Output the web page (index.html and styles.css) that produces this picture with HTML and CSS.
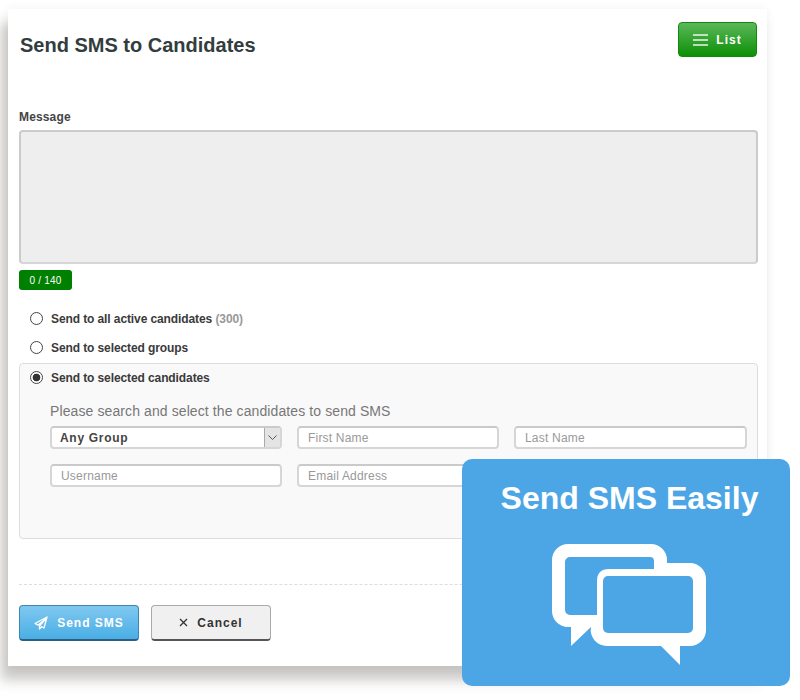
FILE: index.html
```html
<!DOCTYPE html>
<html lang="en">
<head>
  <meta charset="UTF-8" />
  <title>Send SMS to Candidates</title>
  <link rel="stylesheet" href="styles.css">
</head>
<body>
  <div class="card">
    <header class="top">
      <h1>Send SMS to Candidates</h1>
      <button class="btn btn-list">
        <svg width="15" height="12" viewBox="0 0 15 12"><path d="M0 1h15M0 6h15M0 11h15" stroke="#fff" stroke-width="1.400" opacity=".9"/></svg>
        List
      </button>
    </header>

    <label class="msg-label">Message</label>
    <div class="msg-box"></div>
    <span class="counter">0 / 140</span>

    <div class="opt"><span class="radio"></span><span>Send to all active candidates <em>(300)</em></span></div>
    <div class="opt"><span class="radio"></span><span>Send to selected groups</span></div>

    <section class="picker">
      <div class="opt opt-on"><span class="radio checked"></span><span>Send to selected candidates</span></div>
      <p class="hint">Please search and select the candidates to send SMS</p>
      <div class="fields">
        <div class="fake-select">
          <span>Any Group</span>
          <span class="arrow"><svg width="9" height="5" viewBox="0 0 9 5"><path d="M.5.5l4 4 4-4" fill="none" stroke="#555"/></svg></span>
        </div>
        <input type="text" placeholder="First Name">
        <input type="text" placeholder="Last Name">
        <input type="text" placeholder="Username">
        <input type="text" placeholder="Email Address">
      </div>
    </section>

    <div class="actions">
      <button class="btn btn-send">
        <svg width="14" height="14" viewBox="0 0 14 14"><path d="M13 1L1 7.500l3.200 1.600L12 2.500 5.500 10v3l2-2.300 2.500 1.300z" fill="none" stroke="#fff" stroke-width="1.300" stroke-linejoin="round"/></svg>
        Send SMS
      </button>
      <button class="btn btn-cancel">
        <svg width="9" height="9" viewBox="0 0 9 9"><path d="M1 1l7 7M8 1L1 8" stroke="#333" stroke-width="1.300"/></svg>
        Cancel
      </button>
    </div>
  </div>

  <aside class="promo">
    <h2>Send SMS Easily</h2>
    <svg class="promo-icon" width="154" height="121" viewBox="0 0 154 121">
      <path fill="#fff" d="M16 0H99a16 16 0 0 1 16 16V19H138a16 16 0 0 1 16 16V86a16 16 0 0 1-16 16H128V121L109 102H55a16 16 0 0 1-16-19L19 102V83H16A16 16 0 0 1 0 67V16A16 16 0 0 1 16 0Z"/>
      <path fill="#4ca6e6" d="M18 13H98a4 4 0 0 1 4 4V25H57Q45 25 45 37V71H18a5 5 0 0 1-5-5V18a5 5 0 0 1 5-5Z"/>
      <rect fill="#4ca6e6" x="51" y="32" width="90" height="57" rx="5"/>
    </svg>
  </aside>
</body>
</html>
```

FILE: styles.css
```css
* {
  box-sizing: border-box;
}
html, body {
  min-height: 700px;
}
body {
  margin: 0;
  padding: 9px 0 34px 8px;
  background: #fff;
  font-family: "Liberation Sans", Arial, sans-serif;
  color: #333;
}

.card {
  width: 759px;
  height: 657px;
  padding: 13px 9px 0 11px;
  background: #fff;
  box-shadow: -7px 14px 12px rgba(60, 58, 50, .28), 0 0 10px rgba(0, 0, 0, .06);
}

.top {
  display: flex;
  justify-content: space-between;
  align-items: flex-start;
  height: 35px;
  padding: 0 1px;
}
.top h1 {
  margin: 0;
  font-size: 20px;
  line-height: 46px;
  color: #333d3d;
}

.btn {
  display: flex;
  align-items: center;
  justify-content: center;
  font-family: "Liberation Sans", Arial, sans-serif;
  font-weight: bold;
  border-radius: 4px;
  cursor: pointer;
}
.btn-list {
  width: 79px;
  height: 35px;
  gap: 8px;
  font-size: 12px;
  letter-spacing: 1px;
  color: #fff;
  border: 1px solid #118a0b;
  background: linear-gradient(180deg, #5ab85a, #0d8f06);
}

.msg-label {
  display: block;
  margin-top: 53px;
  font-size: 12px;
  line-height: 14px;
  font-weight: bold;
  letter-spacing: .15px;
  color: #444;
}
.msg-box {
  height: 134px;
  margin-top: 6px;
  background: #eee;
  border: 2px solid #cbcbcb;
  border-bottom-color: #d6d6d6;
  border-radius: 4px;
}
.counter {
  display: block;
  width: 53px;
  height: 20px;
  margin-top: 6px;
  background: #008000;
  color: #fff;
  border-radius: 3px;
  font-size: 10px;
  letter-spacing: .2px;
  line-height: 21px;
  text-align: center;
}

.opt {
  display: flex;
  align-items: center;
  gap: 8px;
  height: 29px;
  padding-left: 11px;
  font-size: 12px;
  font-weight: bold;
  letter-spacing: -.1px;
  color: #3a3a3a;
}
.counter + .opt {
  margin-top: 14px;
}
.opt em {
  font-style: normal;
  color: #999;
}
.radio {
  width: 13px;
  height: 13px;
  border: 1px solid #444;
  border-radius: 50%;
  background: #fff;
}
.radio.checked {
  background: radial-gradient(circle, #333 0, #333 3.500px, #fff 4.200px);
}

.picker {
  height: 176px;
  margin-top: 1px;
  background: #f9f9f9;
  border: 1px solid #ddd;
  border-radius: 4px;
  padding: 0 10px 0 30px;
}
.opt-on {
  margin-left: -31px;
  height: 27px;
}
.hint {
  margin: 12px 0 7px;
  font-size: 14px;
  line-height: 16px;
  letter-spacing: .1px;
  color: #777;
}
.fields {
  display: grid;
  grid-template-columns: 232px 202px 233px;
  grid-auto-rows: 23px;
  gap: 15px;
}
.fields input,
.fake-select {
  height: 23px;
  width: 100%;
  background: #fff;
  border: 2px solid #d6d6d6;
  border-top-color: #cacaca;
  border-radius: 4px;
  font-family: "Liberation Sans", Arial, sans-serif;
  font-size: 12px;
  letter-spacing: .2px;
  padding: 0 9px;
}
.fields input::placeholder {
  color: #999;
}
.fake-select {
  display: flex;
  justify-content: space-between;
  align-items: center;
  padding: 0 0 0 8px;
  font-weight: bold;
  letter-spacing: .7px;
  color: #444;
}
.arrow {
  display: flex;
  align-items: center;
  justify-content: center;
  width: 16px;
  height: 100%;
  background: #e4e4e4;
  border-left: 1px solid #aaa;
}

.actions {
  display: flex;
  gap: 12px;
  margin-top: 45px;
  padding-top: 20px;
  border-top: 1px dashed #ddd;
}
.actions .btn {
  width: 120px;
  height: 36px;
  gap: 9px;
  font-size: 12px;
  letter-spacing: 1px;
}
.btn-send {
  color: #fff;
  border: 1px solid #3d86b4;
  border-bottom: 2px solid #2a5f80;
  background: linear-gradient(180deg, #80c8f0, #4aaee5);
}
.btn-cancel {
  color: #333;
  border: 1px solid #aaa;
  border-bottom: 2px solid #555;
  background: #f0f0f0;
}

.promo {
  position: absolute;
  left: 462px;
  top: 459px;
  width: 328px;
  height: 227px;
  background: #4ca6e6;
  border-radius: 10px;
  text-align: center;
}
.promo h2 {
  margin: 21px 0 0;
  padding-left: 7px;
  font-size: 32px;
  line-height: 36px;
  color: #fff;
}
.promo-icon {
  display: block;
  margin: 28px 0 0 90px;
}
```
